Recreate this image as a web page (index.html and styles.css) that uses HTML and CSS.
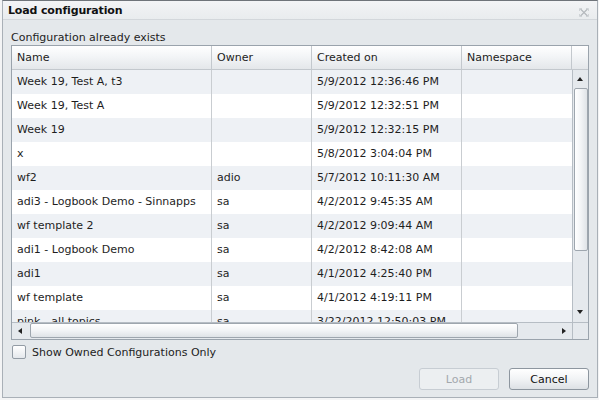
FILE: index.html
```html
<!DOCTYPE html>
<html>
<head>
<meta charset="utf-8">
<link rel="stylesheet" href="styles.css">
</head>
<body>
<div class="dialog">
  <div class="titlebar">
    <span class="title">Load configuration</span>
    <svg class="close" width="10" height="9" viewBox="0 0 10 9">
      <path d="M1.5 1L8.5 8M8.5 1L1.5 8" stroke="#b4b8bc" stroke-width="1.1" fill="none"/>
      <path d="M0.5 3V0.5H3M7 0.5H9.5V3M9.5 6V8.5H7M3 8.5H0.5V6" stroke="#cfd3d6" stroke-width="1" fill="none"/>
    </svg>
  </div>
  <div class="content">
    <div class="label">Configuration already exists</div>
    <div class="grid">
      <div class="header">
        <div class="hcell c-name">Name</div>
        <div class="hcell c-owner">Owner</div>
        <div class="hcell c-created">Created on</div>
        <div class="hcell c-ns">Namespace</div>
        <div class="hcell c-sb"></div>
      </div>
      <div class="body">
        <div class="rows">
          <div class="row alt"><div class="cell c-name">Week 19, Test A, t3</div><div class="cell c-owner"></div><div class="cell c-created">5/9/2012 12:36:46 PM</div><div class="cell c-ns"></div></div>
          <div class="row"><div class="cell c-name">Week 19, Test A</div><div class="cell c-owner"></div><div class="cell c-created">5/9/2012 12:32:51 PM</div><div class="cell c-ns"></div></div>
          <div class="row alt"><div class="cell c-name">Week 19</div><div class="cell c-owner"></div><div class="cell c-created">5/9/2012 12:32:15 PM</div><div class="cell c-ns"></div></div>
          <div class="row"><div class="cell c-name">x</div><div class="cell c-owner"></div><div class="cell c-created">5/8/2012 3:04:04 PM</div><div class="cell c-ns"></div></div>
          <div class="row alt"><div class="cell c-name">wf2</div><div class="cell c-owner">adio</div><div class="cell c-created">5/7/2012 10:11:30 AM</div><div class="cell c-ns"></div></div>
          <div class="row"><div class="cell c-name">adi3 - Logbook Demo - Sinnapps</div><div class="cell c-owner">sa</div><div class="cell c-created">4/2/2012 9:45:35 AM</div><div class="cell c-ns"></div></div>
          <div class="row alt"><div class="cell c-name">wf template 2</div><div class="cell c-owner">sa</div><div class="cell c-created">4/2/2012 9:09:44 AM</div><div class="cell c-ns"></div></div>
          <div class="row"><div class="cell c-name">adi1 - Logbook Demo</div><div class="cell c-owner">sa</div><div class="cell c-created">4/2/2012 8:42:08 AM</div><div class="cell c-ns"></div></div>
          <div class="row alt"><div class="cell c-name">adi1</div><div class="cell c-owner">sa</div><div class="cell c-created">4/1/2012 4:25:40 PM</div><div class="cell c-ns"></div></div>
          <div class="row"><div class="cell c-name">wf template</div><div class="cell c-owner">sa</div><div class="cell c-created">4/1/2012 4:19:11 PM</div><div class="cell c-ns"></div></div>
          <div class="row alt"><div class="cell c-name">pink - all topics</div><div class="cell c-owner">sa</div><div class="cell c-created">3/22/2012 12:50:03 PM</div><div class="cell c-ns"></div></div>
        </div>
        <div class="vscroll">
          <div class="arrow up"></div>
          <div class="vtrack"><div class="vthumb"></div></div>
          <div class="arrow down"></div>
        </div>
      </div>
      <div class="hscrollrow">
        <div class="hscroll">
          <div class="arrow left"></div>
          <div class="htrack"><div class="hthumb"></div></div>
          <div class="arrow right"></div>
        </div>
        <div class="corner"></div>
      </div>
    </div>
    <label class="check"><span class="box"></span><span>Show Owned Configurations Only</span></label>
    <div class="buttons">
      <button class="btn disabled">Load</button>
      <button class="btn">Cancel</button>
    </div>
  </div>
</div>
</body>
</html>
```

FILE: styles.css
```css
* { box-sizing: border-box; }
html, body { margin: 0; padding: 0; }
body {
  background: #f3f4f5;
  font-family: "DejaVu Sans", Verdana, sans-serif;
  font-size: 11px;
  color: #1e1e1e;
  width: 599px;
  height: 400px;
  overflow: hidden;
}
.dialog {
  margin-left: 2px;
  width: 596px;
  height: 398px;
  border: 1px solid #a9b0b7;
  border-top-color: #6f747a;
  background: #e4e8eb;
  display: flex;
  flex-direction: column;
}
.titlebar {
  height: 19px;
  flex: none;
  background: linear-gradient(#f3f4f6, #e9ecee);
  border-bottom: 1px solid #d3d7db;
  display: flex;
  align-items: center;
  justify-content: space-between;
  padding: 0 8px 0 5px;
}
.title {
  font-weight: bold;
  font-size: 11px;
  letter-spacing: -0.15px;
  color: #111;
}
.close { display: block; margin-top: 4px; }
.content {
  padding: 10px 8px 0 8px;
  display: flex;
  flex-direction: column;
}
.label {
  height: 15px;
  line-height: 15px;
  color: #222;
}
.grid {
  width: 578px;
  height: 295px;
  border: 1px solid #9aa3ac;
  background: #fff;
  display: flex;
  flex-direction: column;
}
.header {
  display: flex;
  height: 24px;
  flex: none;
  background: linear-gradient(#ffffff, #f3f5f7 45%, #e4e7ea);
  border-bottom: 1px solid #c3c8cd;
}
.hcell {
  border-right: 1px solid #c3c8cd;
  padding-left: 5px;
  line-height: 23px;
  color: #222;
  white-space: nowrap;
}
.c-name { width: 200px; flex: none; }
.c-owner { width: 100px; flex: none; }
.c-created { width: 150px; flex: none; }
.c-ns { width: 110px; flex: none; }
.c-sb { width: 16px; flex: none; border-right: none; }
.body {
  display: flex;
  height: 252px;
  flex: none;
  overflow: hidden;
}
.rows {
  width: 560px;
  flex: none;
  overflow: hidden;
}
.row {
  display: flex;
  height: 24px;
  background: #fff;
}
.row.alt { background: #eef1f5; }
.cell {
  border-right: 1px solid #c9cdd1;
  padding-left: 5px;
  line-height: 24px;
  white-space: nowrap;
  overflow: hidden;
}
.row .c-ns { border-right: none; }
.vscroll {
  width: 16px;
  flex: none;
  border-left: 1px solid #b6bdc4;
  background: #e5e9ed;
  display: flex;
  flex-direction: column;
}
.vtrack { flex: 1; padding: 0 0 0 1px; }
.vthumb {
  margin-top: 0;
  height: 163px;
  width: 14px;
  border: 1px solid #9ea6ae;
  border-radius: 2px;
  background: linear-gradient(90deg, #ffffff, #f2f4f6 50%, #dfe3e7);
}
.arrow {
  flex: none;
  position: relative;
}
.arrow.up, .arrow.down { height: 18px; }
.arrow.up::after, .arrow.down::after, .arrow.left::after, .arrow.right::after {
  content: "";
  position: absolute;
  width: 0; height: 0;
}
.arrow.up::after {
  left: 4px; top: 7px;
  border-left: 3px solid transparent;
  border-right: 3px solid transparent;
  border-bottom: 4px solid #222;
}
.arrow.down::after {
  left: 4px; top: 6px;
  border-left: 3px solid transparent;
  border-right: 3px solid transparent;
  border-top: 4px solid #222;
}
.hscrollrow {
  display: flex;
  height: 17px;
  flex: none;
  border-top: 1px solid #b6bdc4;
}
.hscroll {
  width: 560px;
  flex: none;
  display: flex;
  background: #e5e9ed;
}
.arrow.left, .arrow.right { width: 18px; }
.arrow.left::after {
  left: 6px; top: 5px;
  border-top: 3px solid transparent;
  border-bottom: 3px solid transparent;
  border-right: 4px solid #222;
}
.arrow.right::after {
  left: 8px; top: 5px;
  border-top: 3px solid transparent;
  border-bottom: 3px solid transparent;
  border-left: 4px solid #222;
}
.htrack { flex: 1; }
.hthumb {
  width: 488px;
  height: 15px;
  border: 1px solid #9ea6ae;
  border-radius: 2px;
  background: linear-gradient(#ffffff, #f2f4f6 50%, #dfe3e7);
}
.corner {
  width: 16px;
  flex: none;
  border-left: 1px solid #b6bdc4;
  background: #e5e9ed;
}
.check {
  display: flex;
  align-items: center;
  margin-top: 5px;
  height: 14px;
  color: #222;
}
.box {
  width: 14px;
  height: 14px;
  border: 1px solid #939ca5;
  border-radius: 2px;
  background: linear-gradient(#ffffff, #e4e8ec);
  margin: 0 6px 0 1px;
  flex: none;
}
.buttons {
  display: flex;
  justify-content: flex-end;
  gap: 10px;
  margin-top: 9px;
}
.btn {
  width: 80px;
  height: 22px;
  font-family: "DejaVu Sans", Verdana, sans-serif;
  font-size: 11px;
  color: #111;
  border: 1px solid #8d969f;
  border-radius: 3px;
  background: linear-gradient(#ffffff, #f1f3f5 50%, #dde1e5);
  padding: 0;
}
.btn.disabled {
  color: #a3a8ad;
  border-color: #c7cdd3;
  background: #eceff1;
}
```
